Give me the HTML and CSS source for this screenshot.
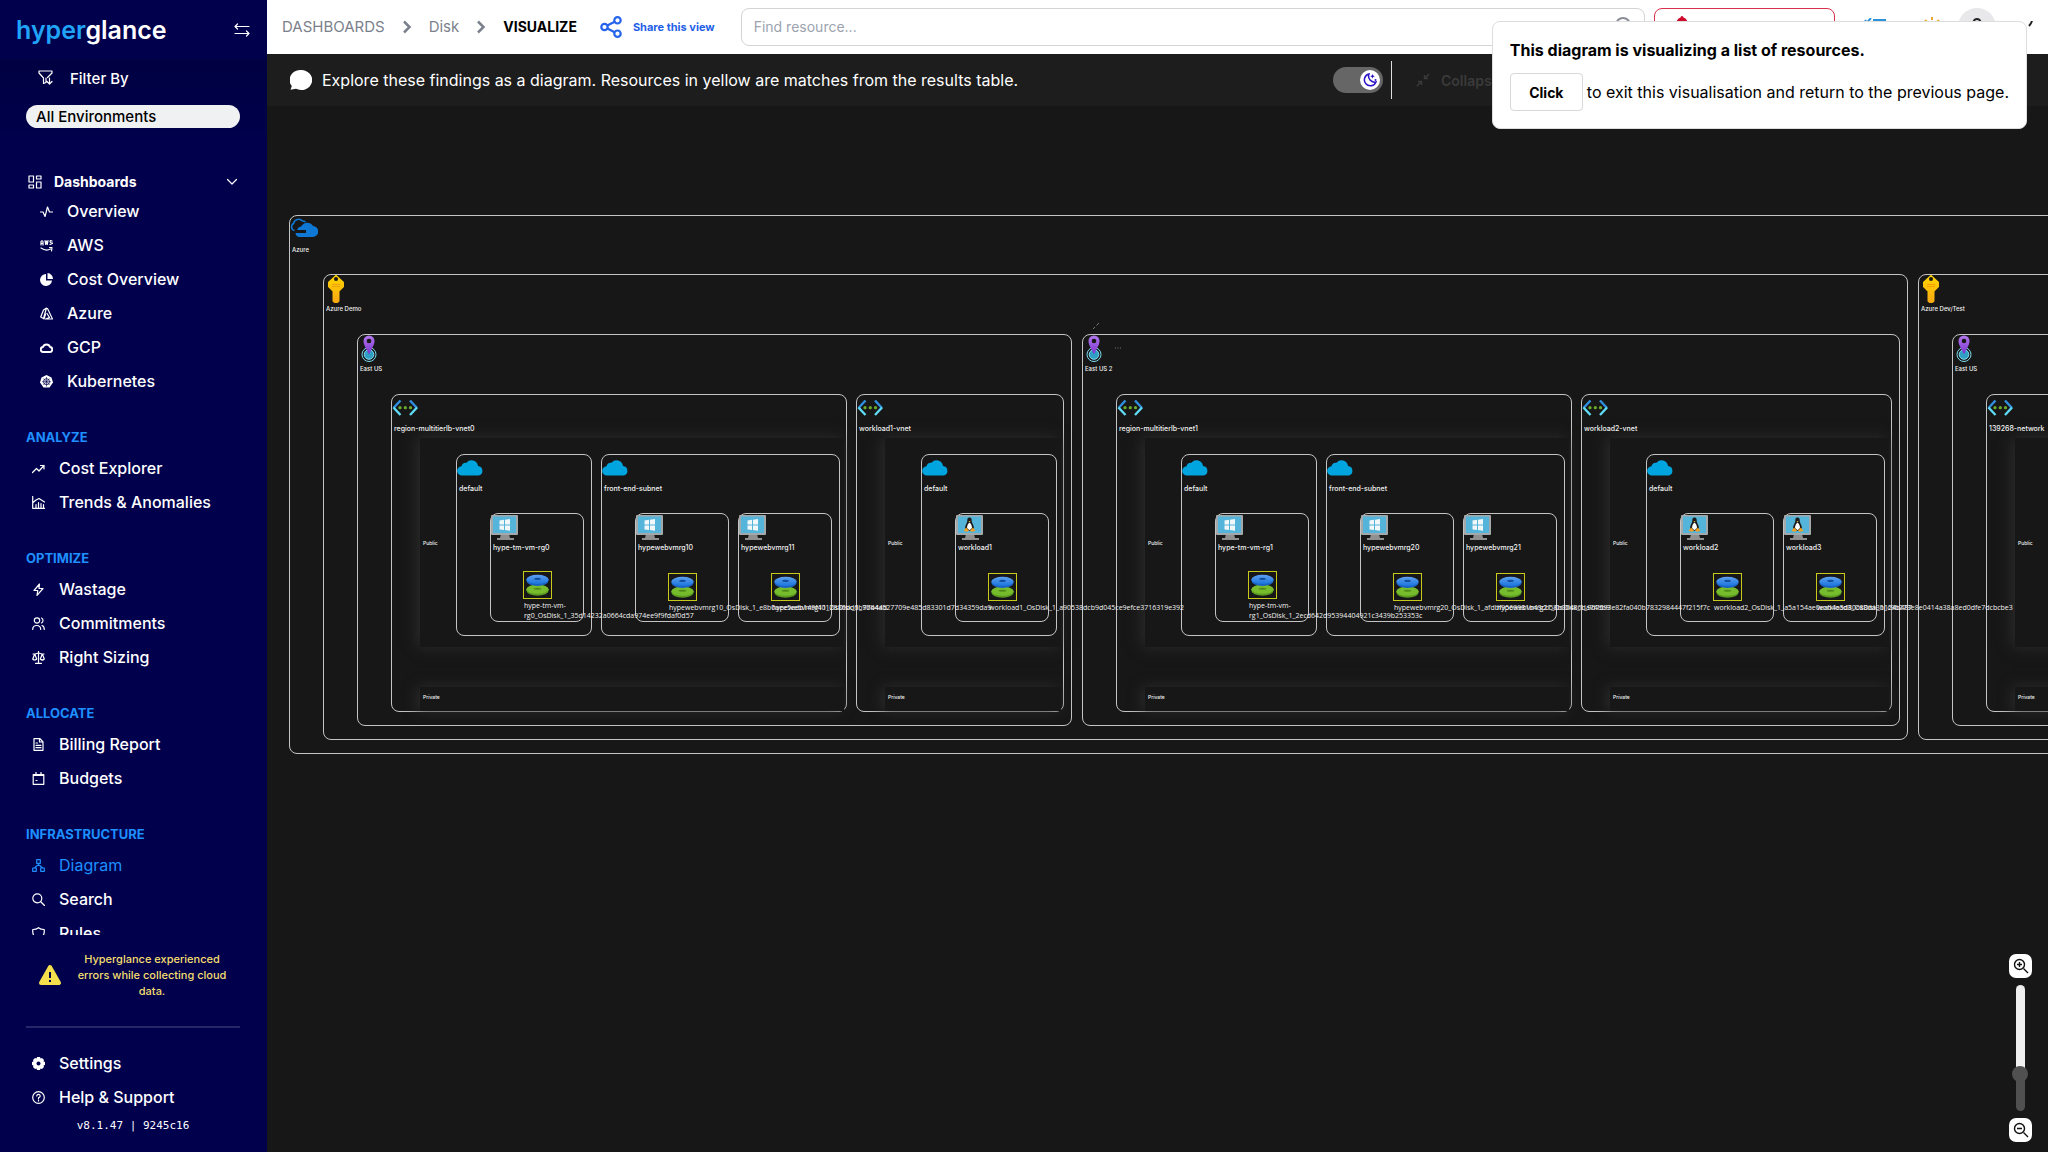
FILE: index.html
```html
<!DOCTYPE html>
<html lang="en">
<head>
<meta charset="utf-8">
<title>Hyperglance - Visualize</title>
<link rel="stylesheet" href="styles.css">
</head>
<body>
<svg class="sprite" aria-hidden="true">
  <linearGradient id="g-key" x1="0" y1="0" x2="0" y2="1"><stop offset="0" stop-color="#ffd400"/><stop offset="1" stop-color="#f7a813"/></linearGradient>
  <linearGradient id="g-pin" x1="0" y1="0" x2="0" y2="1"><stop offset="0" stop-color="#b277ec"/><stop offset="1" stop-color="#7a34cf"/></linearGradient>
  <linearGradient id="g-blue" x1="0" y1="0" x2="0" y2="1"><stop offset="0" stop-color="#5ea0ef"/><stop offset="1" stop-color="#1a74dd"/></linearGradient>
  <symbol id="azure" viewBox="0 0 28 28"><path d="M4.500 14.500a3.800 3.800 0 0 1-1-7 5.200 5.200 0 0 1 9-2.500 4.500 4.500 0 0 1 3 1" fill="none" stroke="#0f78d4" stroke-width="1.500"/><path d="M9 21a4.500 4.500 0 0 1-3.500-4H16v-3H7a5 5 0 0 1 4-3.500 7 7 0 0 1 12-.5 5.500 5.500 0 0 1-.5 11z" fill="#0f78d4"/></symbol>
  <symbol id="key" viewBox="2 0 28 28"><path d="M14 1l7 6.500v4L16.500 16v10L14 28l-2.500-2V16L7 11.500v-4z" fill="url(#g-key)" stroke="url(#g-key)" stroke-width="2" stroke-linejoin="round"/><circle cx="14" cy="4" r="2" fill="#171717"/><path d="M10 9.500h8M10 11.500h8" stroke="#f0a000" stroke-width="1"/></symbol>
  <symbol id="pin" viewBox="0 0 28 28"><circle cx="11" cy="19.500" r="7" fill="none" stroke="#7fdcf0" stroke-width="1"/><circle cx="11" cy="19.500" r="4.800" fill="#2f9fc4" stroke="#7fdcf0" stroke-width="1"/><path d="M11 19.500C8 13 5.500 10 5.500 6a5.500 5.500 0 0 1 11 0c0 4-2.500 7-5.500 13.500z" fill="url(#g-pin)"/><circle cx="11" cy="6" r="2.300" fill="#171717"/></symbol>
  <symbol id="vnet" viewBox="0 0 28 28"><g fill="none" stroke-width="2.400"><path d="M8.500 5.500L1.500 13" stroke="#2f8fe0"/><path d="M1.500 12.500L8.500 20" stroke="#5fdcf5"/><path d="M18 5.500l7 7.500" stroke="#2f8fe0"/><path d="M25 12.500L18 20" stroke="#5fdcf5"/></g><g fill="#6bad2b"><circle cx="8" cy="12.700" r="1.600"/><circle cx="13.300" cy="12.700" r="1.600"/><circle cx="18.500" cy="12.700" r="1.600"/></g></symbol>
  <symbol id="cloud" viewBox="0 0 28 28"><path d="M5 20.500a4.600 4.600 0 0 1-.5-9.200 4.500 4.500 0 0 1 5-3.500 6.500 6.500 0 0 1 11.500 3.200 4.800 4.800 0 0 1 .5 9.500z" fill="#00a4de"/></symbol>
  <symbol id="vm" viewBox="0 0 28 28"><path d="M10 20h8l1 4h4v2H6v-2h3z" fill="#909090"/><rect width="27" height="20" rx="1" y="1" fill="#a3a8aa"/><rect x="2" y="2.500" width="23" height="16.500" fill="#54b4da"/></symbol>
  <symbol id="win" viewBox="0 0 28 28"><use href="#vm"/><path d="M8.500 6.500l4.500-.7v4.700H8.500zM14 5.700l5-.7v5.500h-5zM8.500 11.500H13v4.500l-4.500-.6zM14 11.500h5v5.300l-5-.7z" fill="#f2f7fa"/></symbol>
  <symbol id="tux" viewBox="0 0 28 28"><use href="#vm"/><path d="M13.500 3.500c-2 0-2.300 1.500-2.200 3.500 0 2-2.600 4.500-2.300 8l4.500 2 4.500-2c.3-3.500-2.300-6-2.300-8 .1-2-.2-3.500-2.200-3.500z" fill="#1b1b1b"/><path d="M13.500 8.500c-1.500 1-2.500 3-2.500 5.500l2.500 2.300L16 14c0-2.500-1-4.500-2.500-5.500z" fill="#fff"/><path d="M7.500 17l2.500-3.500 3 3-1.500 1.300zM19.500 17L17 13.500l-3 3 1.500 1.300zM12.300 7h2.400l-1.200 1.300z" fill="#f0a020"/></symbol>
  <symbol id="disk" viewBox="0 0 28 28"><ellipse cx="14" cy="20" rx="12" ry="5.500" fill="#5a9a1e"/><ellipse cx="14" cy="18.500" rx="12" ry="5" fill="#76bc2d"/><ellipse cx="14" cy="18" rx="4" ry="1" fill="#4f8a1a"/><ellipse cx="14" cy="9.500" rx="12" ry="5.500" fill="#1a62c4"/><ellipse cx="14" cy="8" rx="12" ry="5" fill="url(#g-blue)"/><ellipse cx="14" cy="7.500" rx="3.500" ry="1.200" fill="#124f9e"/></symbol>
</svg>

<div class="app">
  <aside class="sidebar">
    <div class="brand">
      <a class="logo" href="#"><span class="logo-blue">hyper</span>glance</a>
      <button class="plain" aria-label="Collapse menu"><svg width="16" height="14" viewBox="0 0 16 14" class="line"><path d="M15 3.500H1M3.500 1L1 3.500 3.500 6M1 10.500h14M12.500 8L15 10.500 12.500 13"/></svg></button>
    </div>
    <div class="filter">
      <div class="filter-title"><svg width="16" height="16" viewBox="0 0 16 16" class="line"><path d="M1 1h13v2L9.500 7.500M1 1v2l4.500 5v5.500l2.500-1V8M11.500 8v6M9 11.500l2.500 2.500 2.500-2.500"/></svg><span>Filter By</span></div>
      <button class="env">All Environments</button>
    </div>
    <nav class="nav">
      <button class="group"><svg width="14" height="14" viewBox="0 0 14 14" class="line"><path d="M1 1h4.500v6H1zM8.500 1H13v3H8.500zM8.500 7H13v6H8.500zM1 10h4.500v3H1z"/></svg><span>Dashboards</span><svg width="12" height="12" viewBox="0 0 12 12" class="line"><path d="M1.500 3.500L6 8l4.500-4.500"/></svg></button>
      <ul class="links sub">
        <li><a href="#"><svg width="13" height="13" viewBox="0 0 13 13" class="line"><path d="M.5 7H3l2 4.500L7.500 2l2 5h3"/></svg>Overview</a></li>
        <li><a href="#"><svg width="13" height="13" viewBox="0 0 13 13" class="line"><path d="M1 6V2.500q1-1.500 2 0V6M1 4.500h2M5 1.500L5.700 5.500 6.500 2l.8 3.500L8 1.500M12 2q-2-1-2 .5t2 1.500-2 1.500M1 9q5 3.500 9.500 1M9.500 8.500H12L11.500 12"/></svg>AWS</a></li>
        <li><a href="#"><svg width="13" height="13" viewBox="0 0 13 13" class="solid"><path d="M6 1a6 6 0 1 0 6 6.500H6z"/><path d="M7.500 0a6 6 0 0 1 5.500 6H7.500z"/></svg>Cost Overview</a></li>
        <li><a href="#"><svg width="13" height="13" viewBox="0 0 13 13" class="line"><path d="M6.500 1L3.500 3 .7 10 3.500 11.500zM5.500 7L4 12M7.500 1.500l5 10.500H5.500L9.500 10.500 7 6.500"/></svg>Azure</a></li>
        <li><a href="#"><svg width="13" height="13" viewBox="0 0 13 13" class="line bold"><path d="M3.500 11a2.500 2.500 0 0 1-.5-5 3.700 3.700 0 0 1 7 0 2.500 2.500 0 0 1-.5 5z"/></svg>GCP</a></li>
        <li><a href="#"><svg width="13" height="13" viewBox="0 0 13 13"><path d="M6.500 0l5 2.500L13 7.500 9.500 12.500h-6L0 7.500l1.500-5z" fill="#fff"/><g stroke="#00004d" fill="none" stroke-width=".8"><circle cx="6.500" cy="6.700" r="3"/><path d="M6.500 2v9.500M2 6.700h9M3.300 3.500l6.400 6.400M9.700 3.500L3.300 9.900" stroke-width=".6"/></g></svg>Kubernetes</a></li>
      </ul>
      <h2>ANALYZE</h2>
      <ul class="links">
        <li><a href="#"><svg width="13" height="13" viewBox="0 0 13 13" class="line"><path d="M.5 10.500L4.500 6.500l2.500 2.500 5-5.500M8.500 3.500H12V7"/></svg>Cost Explorer</a></li>
        <li><a href="#"><svg width="13" height="13" viewBox="0 0 13 13" class="line"><path d="M.7.500v11.800h12M1 6.500L4 4l3-1.500 5.500 3.500M4 12V8.500M6.500 12V6.500M9 12V7.500M11.500 12V8.500"/></svg>Trends &amp; Anomalies</a></li>
      </ul>
      <h2>OPTIMIZE</h2>
      <ul class="links">
        <li><a href="#"><svg width="13" height="13" viewBox="0 0 13 13" class="line"><path d="M7.500 1L2 7.500h3.800L5 12.300 11 5.500H7z"/></svg>Wastage</a></li>
        <li><a href="#"><svg width="13" height="13" viewBox="0 0 13 13" class="line"><circle cx="5" cy="3.500" r="2.700"/><path d="M.7 12.500q0-4 4-4t4 4M9.500 1q1.500.7 1.500 2.500T9.500 6M10 8.500q2.300.7 2.300 4"/></svg>Commitments</a></li>
        <li><a href="#"><svg width="13" height="13" viewBox="0 0 13 13" class="line"><path d="M6.500.5v11.800M3.500 12.300h6M1 3h2l3.500-1L10 3h2M2.700 3L.7 8q2 2 4 0zM10.300 3l-2 5q2 2 4 0z"/></svg>Right Sizing</a></li>
      </ul>
      <h2>ALLOCATE</h2>
      <ul class="links">
        <li><a href="#"><svg width="13" height="13" viewBox="0 0 13 13" class="line"><path d="M2 .7h6L11 4v8.300H2zM7.500.7V4H11M4 5h1.500M4 7.300h5M4 9.700h5"/></svg>Billing Report</a></li>
        <li><a href="#"><svg width="13" height="13" viewBox="0 0 13 13" class="line"><path d="M1.200 2.500h10.600v9.800H1.200zM1.200 3.500h10.600M4 .5v2M9 .5v2M4 8.500h1"/></svg>Budgets</a></li>
      </ul>
      <h2>INFRASTRUCTURE</h2>
      <ul class="links">
        <li><a href="#" class="current"><svg width="13" height="13" viewBox="0 0 13 13" class="line"><path d="M4.700.7h3.600v3.600H4.700zM.7 9h3.600v3.300H.7zM8.700 9h3.600v3.300H8.700zM6.500 4.300v2M2.500 9l3-2.700h2l3 2.700"/></svg>Diagram</a></li>
        <li><a href="#"><svg width="13" height="13" viewBox="0 0 13 13" class="line"><circle cx="5.300" cy="5.300" r="4.500"/><path d="M8.500 8.500l4 4"/></svg>Search</a></li>
        <li><a href="#"><svg width="13" height="13" viewBox="0 0 13 13" class="line"><path d="M6.500.7Q4.500 2.500.8 2.500 0 10 6.500 12.500 13 10 12.200 2.500 8.500 2.500 6.500.7z"/></svg>Rules</a></li>
      </ul>
    </nav>
    <div class="side-foot">
      <div class="warn"><svg width="24" height="22" viewBox="0 0 24 22"><path d="M12 3L21 19H3z" fill="#f5df4d" stroke="#f5df4d" stroke-width="4" stroke-linejoin="round"/><path d="M12 8v6M12 16v2" stroke="#00004d" stroke-width="2"/></svg><p>Hyperglance experienced errors while collecting cloud data.</p></div>
      <hr>
      <ul class="links">
        <li><a href="#"><svg width="13" height="13" viewBox="0 0 13 13"><path d="M5 0h3l.5 1.500 1.500-.5 2 2-.5 1.500L13 5v3l-1.500.5.500 1.500-2 2-1.500-.5L8 13H5l-.5-1.500L3 12l-2-2 .5-1.500L0 8V5l1.500-.5L1 3l2-2 1.500.5z" fill="#fff"/><circle cx="6.500" cy="6.500" r="2" fill="#00004d"/></svg>Settings</a></li>
        <li><a href="#"><svg width="13" height="13" viewBox="0 0 13 13" class="line"><circle cx="6.500" cy="6.500" r="5.800"/><path d="M4.700 5q.3-1.700 1.900-1.600 1.700.2 1.600 1.700-.2 1-1.700 1.700v.9M6.500 9v1"/></svg>Help &amp; Support</a></li>
      </ul>
      <p class="version">v8.1.47 | 9245c16</p>
    </div>
  </aside>

  <div class="main">
    <header class="topbar">
      <nav class="crumbs" aria-label="Breadcrumb">
        <a href="#">DASHBOARDS</a>
        <svg width="10" height="14" viewBox="0 0 10 14"><path d="M2 1.500L7.500 7 2 12.500"/></svg>
        <a href="#">Disk</a>
        <svg width="10" height="14" viewBox="0 0 10 14"><path d="M2 1.500L7.500 7 2 12.500"/></svg>
        <b>VISUALIZE</b>
      </nav>
      <a class="share" href="#"><svg width="22" height="22" viewBox="0 0 22 22"><circle cx="4.500" cy="11" r="3.200"/><circle cx="17.500" cy="4.300" r="3.200"/><circle cx="17.500" cy="17.700" r="3.200"/><path d="M7.300 9.500l7.400-3.800M7.300 12.500l7.400 3.800"/></svg>Share this view</a>
      <label class="search"><input type="text" placeholder="Find resource..." aria-label="Find resource"><svg width="20" height="20" viewBox="0 0 20 20"><circle cx="9" cy="8" r="7"/><path d="M14 13l5 5"/></svg></label>
      <button class="alerts" aria-label="Alerts"><svg width="18" height="22" viewBox="0 0 18 22"><path d="M9 0q1.500 0 1.500 1.500Q15 3 15 9v5l2.500 3h-17L3 14V9q0-6 4.500-7.500Q7.500 0 9 0z" fill="#cf0a2c"/></svg></button>
      <div class="tools">
        <button class="plain" aria-label="Tasks"><svg width="22" height="18" viewBox="0 0 22 18" fill="none" stroke="#2b93d9"><path d="M1 2l2 2.500L7 0" stroke-width="2"/><path d="M9 3h13M9 9h13M9 15h13" stroke-width="4"/></svg></button>
        <button class="plain" aria-label="Theme"><svg width="20" height="20" viewBox="0 0 20 20" fill="none" stroke="#eda534" stroke-width="2"><circle cx="10" cy="10" r="4"/><path d="M10 0v3M3 3l2 2M17 3l-2 2M0 10h3M17 10h3M10 17v3M3 17l2-2M17 17l-2-2"/></svg></button>
        <button class="avatar" aria-label="Account"><svg width="18" height="18" viewBox="0 0 18 18"><circle cx="9" cy="4.500" r="3.500"/><path d="M2 17q0-7 7-7t7 7"/></svg></button>
        <svg width="8" height="12" viewBox="0 0 8 12"><path d="M6 0q-1 3-3 5" fill="none" stroke="#222" stroke-width="2"/></svg>
      </div>
    </header>
    <div class="subbar">
      <svg width="22" height="20" viewBox="0 0 22 20"><path d="M11 0a11 10 0 1 1-5 18.800L.5 19.800 1.800 16A11 10 0 0 1 11 0z" fill="#fff"/></svg>
      <p>Explore these findings as a diagram. Resources in yellow are matches from the results table.</p>
      <button class="toggle" role="switch" aria-checked="true" aria-label="Dark mode"><span class="knob"><svg width="14" height="14" viewBox="0 0 14 14"><path d="M6 1a6 6 0 1 0 7 8A6 6 0 0 1 6 1z" fill="none" stroke="#2a12c8" stroke-width="1.500"/><path d="M9.500 1l.7 1.600 1.600.7-1.600.7-.7 1.600-.7-1.600-1.600-.7 1.600-.7z" fill="#2a12c8"/><circle cx="12.500" cy="7" r="1" fill="#2a12c8"/></svg></span></button>
      <button class="collapse" disabled><svg width="14" height="14" viewBox="0 0 14 14"><path d="M13 1L8.500 5.500M8.500 2v3.500H12M1 13l4.500-4.500M2 8.500h3.500V12"/></svg>Collapse</button>
    </div>

    <main class="canvas">
      <section class="box cloud">
        <div class="head"><svg><use href="#azure"/></svg><span>Azure</span></div>
        <div class="body">

          <section class="box account">
            <div class="head"><svg><use href="#key"/></svg><span>Azure Demo</span></div>
            <div class="body">
              <section class="box region">
                <div class="head"><svg><use href="#pin"/></svg><span>East US</span></div>
                <div class="body">
                  <section class="box vnet">
                    <div class="head"><svg><use href="#vnet"/></svg><span>region-multitierlb-vnet0</span></div>
                    <div class="zone public"><span class="zone-name">Public</span>
                      <section class="box subnet"><div class="head"><svg><use href="#cloud"/></svg><span>default</span></div><div class="body">
                        <section class="box vm"><div class="head"><svg><use href="#win"/></svg><span>hype-tm-vm-rg0</span></div><div class="disk"><svg><use href="#disk"/></svg><span>hype-tm-vm-rg0_OsDisk_1_35d14232a0664cda974ee9f9fdaf0d57</span></div></section>
                      </div></section>
                      <section class="box subnet"><div class="head"><svg><use href="#cloud"/></svg><span>front-end-subnet</span></div><div class="body">
                        <section class="box vm"><div class="head"><svg><use href="#win"/></svg><span>hypewebvmrg10</span></div><div class="disk"><svg><use href="#disk"/></svg><span>hypewebvmrg10_OsDisk_1_e8b0aee5eeb149f4012886bd6b97b44d</span></div></section>
                        <section class="box vm"><div class="head"><svg><use href="#win"/></svg><span>hypewebvmrg11</span></div><div class="disk"><svg><use href="#disk"/></svg><span>hypewebvmrg11_OsDisk_1_7b44a527709e485d83301d7d34359da9</span></div></section>
                      </div></section>
                    </div>
                    <div class="zone private"><span class="zone-name">Private</span></div>
                  </section>
                  <section class="box vnet">
                    <div class="head"><svg><use href="#vnet"/></svg><span>workload1-vnet</span></div>
                    <div class="zone public"><span class="zone-name">Public</span>
                      <section class="box subnet"><div class="head"><svg><use href="#cloud"/></svg><span>default</span></div><div class="body">
                        <section class="box vm"><div class="head"><svg><use href="#tux"/></svg><span>workload1</span></div><div class="disk"><svg><use href="#disk"/></svg><span>workload1_OsDisk_1_a90538dcb9d045ce9efce3716319e392</span></div></section>
                      </div></section>
                    </div>
                    <div class="zone private"><span class="zone-name">Private</span></div>
                  </section>
                </div>
              </section>

              <section class="box region">
                <div class="head"><svg><use href="#pin"/></svg><span>East US 2</span>
                  <button class="expand" aria-label="Collapse region"><svg viewBox="0 0 8 8"><path d="M7 1L4.500 3.500M1 7l2-2" fill="none" stroke="#777"/></svg></button>
                  <button class="more" aria-label="More"><svg viewBox="0 0 8 8"><path d="M1 4h1M3.500 4h1M6 4h1" stroke="#777"/></svg></button>
                </div>
                <div class="body">
                  <section class="box vnet">
                    <div class="head"><svg><use href="#vnet"/></svg><span>region-multitierlb-vnet1</span></div>
                    <div class="zone public"><span class="zone-name">Public</span>
                      <section class="box subnet"><div class="head"><svg><use href="#cloud"/></svg><span>default</span></div><div class="body">
                        <section class="box vm"><div class="head"><svg><use href="#win"/></svg><span>hype-tm-vm-rg1</span></div><div class="disk"><svg><use href="#disk"/></svg><span>hype-tm-vm-rg1_OsDisk_1_2ecd642d95394404921c3439b253353c</span></div></section>
                      </div></section>
                      <section class="box subnet"><div class="head"><svg><use href="#cloud"/></svg><span>front-end-subnet</span></div><div class="body">
                        <section class="box vm"><div class="head"><svg><use href="#win"/></svg><span>hypewebvmrg20</span></div><div class="disk"><svg><use href="#disk"/></svg><span>hypewebvmrg20_OsDisk_1_afdbf9569981b43cb58b90486da74ab9</span></div></section>
                        <section class="box vm"><div class="head"><svg><use href="#win"/></svg><span>hypewebvmrg21</span></div><div class="disk"><svg><use href="#disk"/></svg><span>hypewebvmrg21_OsDisk_1_9d7593e82fa040b7832984447f215f7c</span></div></section>
                      </div></section>
                    </div>
                    <div class="zone private"><span class="zone-name">Private</span></div>
                  </section>
                  <section class="box vnet">
                    <div class="head"><svg><use href="#vnet"/></svg><span>workload2-vnet</span></div>
                    <div class="zone public"><span class="zone-name">Public</span>
                      <section class="box subnet"><div class="head"><svg><use href="#cloud"/></svg><span>default</span></div><div class="body">
                        <section class="box vm"><div class="head"><svg><use href="#tux"/></svg><span>workload2</span></div><div class="disk"><svg><use href="#disk"/></svg><span>workload2_OsDisk_1_a5a154ae0eab4e5d80c88da3b124b487</span></div></section>
                        <section class="box vm"><div class="head"><svg><use href="#tux"/></svg><span>workload3</span></div><div class="disk"><svg><use href="#disk"/></svg><span>workload3_OsDisk_1_c9b273e8e0414a38a8ed0dfe7dcbcbe3</span></div></section>
                      </div></section>
                    </div>
                    <div class="zone private"><span class="zone-name">Private</span></div>
                  </section>
                </div>
              </section>
            </div>
          </section>

          <section class="box account">
            <div class="head"><svg><use href="#key"/></svg><span>Azure Dev/Test</span></div>
            <div class="body">
              <section class="box region">
                <div class="head"><svg><use href="#pin"/></svg><span>East US</span></div>
                <div class="body">
                  <section class="box vnet wide">
                    <div class="head"><svg><use href="#vnet"/></svg><span>139268-network</span></div>
                    <div class="zone public"><span class="zone-name">Public</span></div>
                    <div class="zone private"><span class="zone-name">Private</span></div>
                  </section>
                </div>
              </section>
            </div>
          </section>
        </div>
      </section>

      <div class="zoom">
        <button aria-label="Zoom in"><svg width="16" height="16" viewBox="0 0 16 16"><circle cx="6.500" cy="6.500" r="5"/><path d="M10.500 10.500L15 15M6.500 4v5M4 6.500h5"/></svg></button>
        <input type="range" min="0" max="100" value="26" aria-label="Zoom level">
        <button aria-label="Zoom out"><svg width="16" height="16" viewBox="0 0 16 16"><circle cx="6.500" cy="6.500" r="5"/><path d="M10.500 10.500L15 15M4 6.500h5"/></svg></button>
      </div>
    </main>
  </div>

  <div class="notice" role="dialog" aria-label="Visualisation">
    <h1>This diagram is visualizing a list of resources.</h1>
    <div class="notice-row"><button>Click</button><span>to exit this visualisation and return to the previous page.</span></div>
  </div>
</div>
</body>
</html>
```
FILE: styles.css
```css
* { box-sizing: border-box; }
body { margin: 0; font-family: Inter, "Noto Sans", sans-serif; font-size: 15px; }
p, ul, h1, h2 { margin: 0; padding: 0; }
ul { list-style: none; }
a { color: inherit; text-decoration: none; }
button { font: inherit; color: inherit; background: none; border: 0; padding: 0; }
svg { flex: none; display: block; }
.sprite { position: absolute; width: 0; height: 0; }
.line { fill: none; stroke: currentColor; stroke-width: 1.2; stroke-linejoin: round; stroke-linecap: round; }
.line.bold { stroke-width: 2; }
.solid { fill: currentColor; }

.app { display: flex; height: 100vh; position: relative; overflow: hidden; }

/* Sidebar */
.sidebar { width: 267px; flex: none; display: flex; flex-direction: column; background: #00004d; color: #fff; font-weight: 500; }
.brand { display: flex; justify-content: space-between; align-items: center; height: 59px; padding: 0 17px 0 16px; }
.logo { font-size: 25px; font-weight: 600; line-height: 30px; }
.logo-blue { color: #20a4f8; }
.filter { height: 96px; padding: 4px 27px 0 26px; background: linear-gradient(#000042, #00004d); }
.filter-title { display: flex; align-items: center; gap: 16px; height: 30px; padding-left: 12px; }
.env { display: block; width: 100%; height: 23px; margin-top: 12px; padding: 0 10px; border-radius: 12px; background: #f0f1f3; color: #000; text-align: left; line-height: 22px; }
.nav { flex: 1; min-height: 0; overflow: hidden; padding-top: 14px; }
.group { display: flex; align-items: center; gap: 12px; width: 100%; height: 25px; padding: 0 29px 0 28px; font-size: 14px; font-weight: 700; text-align: left; }
.group span { flex: 1; }
.links { font-size: 16px; }
.links a { display: flex; align-items: center; gap: 14px; height: 34px; padding-left: 32px; }
.links.sub a { padding-left: 40px; }
.links .current { color: #1e90ff; font-weight: 400; }
.nav h2 { height: 28px; margin-top: 25px; padding-left: 26px; font-size: 13px; font-weight: 700; line-height: 28px; color: #1e90ff; }
.side-foot { padding: 16px 27px 18px 26px; }
.warn { display: flex; align-items: center; gap: 8px; padding: 0 6px 0 12px; font-size: 11px; line-height: 16px; text-align: center; color: #f5df6d; }
.side-foot hr { margin: 27px 0 18px; border: 0; border-top: 2px solid #26266b; }
.side-foot .links a { padding-left: 6px; }
.version { margin-top: 4px; font: 11px/16px "DejaVu Sans Mono", monospace; text-align: center; }

/* Top bars */
.main { flex: 1; min-width: 0; display: flex; flex-direction: column; }
.topbar { flex: none; display: flex; align-items: center; height: 54px; padding: 0 14px 1px 15px; background: #fff; }
.crumbs { display: flex; align-items: center; gap: 17px; color: #7b818c; }
.crumbs svg { fill: none; stroke: #7b818c; stroke-width: 2.5; }
.crumbs b { color: #000; font-size: 14px; font-weight: 700; }
.share { display: flex; align-items: center; gap: 11px; margin: 0 26px 0 23px; font-size: 11px; font-weight: 700; color: #1f5fe6; }
.share svg { fill: none; stroke: #2563eb; stroke-width: 2.2; }
.search { flex: 1; display: flex; align-items: center; height: 38px; padding: 0 10px 0 12px; border: 1px solid #d4d4d8; border-radius: 8px; }
.search input { flex: 1; min-width: 0; border: 0; outline: 0; padding: 0; font: inherit; font-size: 14px; }
.search input::placeholder { color: #9ca3af; }
.search svg { fill: none; stroke: #888d96; stroke-width: 2; }
.alerts { width: 181px; height: 38px; margin: 0 29px 0 9px; padding-left: 18px; border: 1px solid #d9304c; border-radius: 8px; }
.tools { display: flex; align-items: center; gap: 16px; }
.tools > :first-child { margin-right: 20px; }
.avatar { display: grid; place-items: center; width: 38px; height: 38px; margin-right: 14px; border-radius: 50%; background: #e8e8ea; }
.avatar svg { fill: none; stroke: #222; stroke-width: 2; }
.subbar { flex: none; display: flex; align-items: center; height: 52px; padding-left: 23px; background: #1d1d1d; color: #fff; font-size: 16px; }
.subbar p { margin-left: 10px; width: 1011px; line-height: 50px; }
.toggle { flex: none; display: flex; justify-content: flex-end; align-items: center; width: 50px; height: 26px; padding: 0 3px; border-radius: 13px; background: #666; }
.knob { display: grid; place-items: center; width: 20px; height: 20px; border-radius: 50%; background: #fff; }
.collapse { display: flex; align-items: center; gap: 11px; height: 38px; margin-left: 8px; padding-left: 24px; border-left: 1px solid #ddd; color: #3a3a3a; font-size: 14px; font-weight: 600; }
.collapse svg { fill: none; stroke: #3a3a3a; stroke-width: 1.5; }

/* Diagram */
.canvas { flex: 1; min-height: 0; position: relative; overflow: hidden; padding: 109px 0 0 22px; background: #171717; color: #f2f2f2; font-size: 6px; font-weight: 500; line-height: 10px; }
.box { display: flex; flex-direction: column; border: 1px solid #c4c4c4; border-radius: 8px; }
.cloud { width: max-content; }
.head { position: relative; height: 59px; }
.head svg { width: 28px; height: 28px; }
.head span { display: block; padding: 1px 0 0 2px; white-space: nowrap; }
.body { flex: 1; display: flex; gap: 9px; padding: 0 7px 13px 33px; }
.cloud > .body, .account > .body { gap: 10px; }
.cloud > .head, .subnet > .head { height: 58px; }
.vnet > .head { height: 43px; }
.vnet .head { font-size: 7px; }
.expand, .more { position: absolute; }
.expand { top: -13px; left: 9px; }
.more { top: 9px; left: 31px; }
.head .expand svg, .head .more svg { width: 8px; height: 8px; }
.zone { display: flex; align-items: stretch; margin: 0 2px 0 28px; background: #171717; box-shadow: -3px 0 14px #2c2c2c; }
.public { flex: 1; padding: 16px 4px 11px 0; gap: 9px; }
.private { height: 24px; margin-top: 40px; }
.zone-name { align-self: center; width: 27px; padding: 0 0 4px 3px; font-size: 5px; }
.subnet { min-width: 136px; }
.wide { min-width: 208px; }
.vm { width: 94px; height: 109px; }
.vm .head { height: 59px; }
.disk { width: 50px; margin-left: 32px; font-family: "Open Sans", "Noto Sans", sans-serif; font-size: 7px; }
.disk svg { width: 29px; height: 28px; border: 1px solid #c9c91c; }
.disk span { display: block; margin-top: 2px; padding-left: 1px; position: relative; z-index: 1; }

.zoom { position: absolute; right: 16px; bottom: 10px; display: flex; flex-direction: column; align-items: center; gap: 7px; }
.zoom button { display: grid; place-items: center; width: 23px; height: 24px; border-radius: 7px; background: #fff; }
.zoom svg { fill: none; stroke: #111; stroke-width: 1.4; }
.zoom input { appearance: none; writing-mode: vertical-lr; direction: rtl; width: 16px; height: 126px; margin: 0; background: none; }
.zoom input::-webkit-slider-runnable-track { width: 9px; height: 126px; border-radius: 5px; background: linear-gradient(#efefef 70%, #505050 70%); }
.zoom input::-webkit-slider-thumb { appearance: none; width: 16px; height: 16px; margin-left: -4px; border-radius: 50%; background: #505050; }

/* Floating notice */
.notice { position: absolute; top: 21px; right: 21px; z-index: 5; padding: 16px 17px 17px; border: 1px solid #ddd; border-radius: 8px; background: #fff; font-size: 16px; }
.notice h1 { font-size: 16px; font-weight: 700; line-height: 24px; }
.notice-row { display: flex; align-items: center; gap: 4px; margin-top: 11px; }
.notice button { width: 73px; height: 38px; border: 1px solid #d8d8dc; border-radius: 4px; font-size: 14px; font-weight: 700; }
```
